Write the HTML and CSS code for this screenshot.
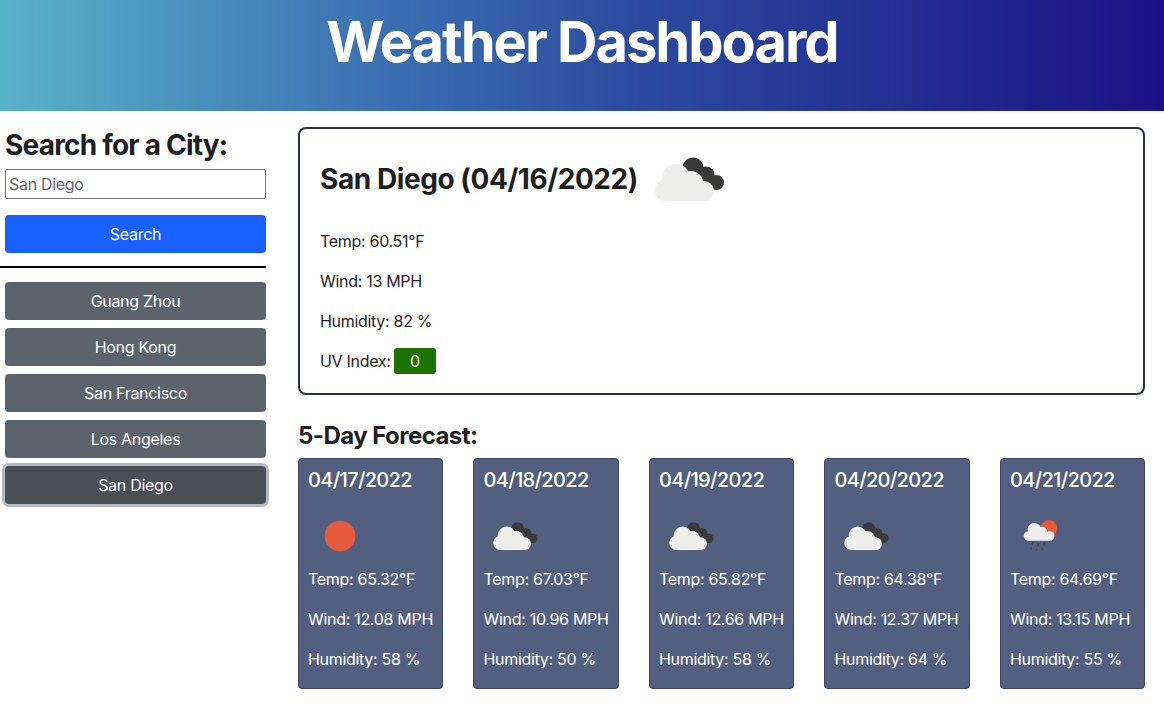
FILE: index.html
```html
<!DOCTYPE html>
<html lang="en">
<head>
  <meta charset="UTF-8" />
  <meta name="viewport" content="width=device-width, initial-scale=1.0" />
  <title>Weather Dashboard</title>
  <link rel="stylesheet" href="styles.css">
</head>
<body>
  <svg class="icon-defs" width="0" height="0" aria-hidden="true">
    <symbol id="light-cloud" viewBox="0 0 100 100">
      <circle cx="27" cy="61" r="11" />
      <circle cx="37" cy="49" r="14" />
      <circle cx="52" cy="54" r="12" />
      <circle cx="65" cy="62" r="10" />
      <rect x="27" y="56" width="38" height="16" />
    </symbol>
    <symbol id="dark-cloud" viewBox="0 0 100 100">
      <circle cx="54" cy="39" r="10.5" />
      <circle cx="67" cy="46" r="8.5" />
      <circle cx="77.5" cy="53.5" r="7.5" />
      <rect x="50" y="40" width="24" height="21" />
    </symbol>
    <symbol id="broken-clouds" viewBox="0 0 100 100">
      <use href="#dark-cloud" class="cloud-dark" />
      <use href="#light-cloud" class="cloud-light" />
    </symbol>
    <symbol id="clear-sky" viewBox="0 0 100 100">
      <circle cx="50" cy="50" r="24" class="sun" />
    </symbol>
    <symbol id="rain-sun" viewBox="0 0 100 100">
      <circle cx="61" cy="38" r="13" class="sun" />
      <g class="cloud-light">
        <circle cx="29" cy="50" r="7.5" />
        <circle cx="38" cy="40" r="10.5" />
        <circle cx="50" cy="44" r="8.5" />
        <circle cx="62" cy="50" r="7.5" />
        <rect x="29" y="46" width="33" height="11.5" />
      </g>
      <path class="rain" d="M36 59l-1.5 5M33.5 68l-1 3.5M45 61l-1.5 5M42 70l-1 3.5M54 60l-1.5 5M51 69l-1 3.5" />
    </symbol>
  </svg>

  <header class="page-header">
    <h1>Weather Dashboard</h1>
  </header>

  <div class="page-body">
    <aside class="sidebar">
      <h2>Search for a City:</h2>
      <form class="search-form">
        <input type="text" placeholder="San Diego" />
        <button type="button" class="btn btn-search">Search</button>
      </form>
      <hr />
      <div class="history">
        <button type="button" class="btn btn-city">Guang Zhou</button>
        <button type="button" class="btn btn-city">Hong Kong</button>
        <button type="button" class="btn btn-city">San Francisco</button>
        <button type="button" class="btn btn-city">Los Angeles</button>
        <button type="button" class="btn btn-city active">San Diego</button>
      </div>
    </aside>

    <main class="content">
      <section class="current">
        <div class="current-title">
          <h2>San Diego (04/16/2022)</h2>
          <svg class="icon-large"><use href="#broken-clouds" /></svg>
        </div>
        <p>Temp: 60.51°F</p>
        <p>Wind: 13 MPH</p>
        <p>Humidity: 82 %</p>
        <p>UV Index: <span class="uv">0</span></p>
      </section>

      <h3 class="forecast-title">5-Day Forecast:</h3>
      <section class="forecast">
        <div class="day">
          <h4>04/17/2022</h4>
          <svg class="icon-small"><use href="#clear-sky" /></svg>
          <p>Temp: 65.32°F</p>
          <p>Wind: 12.08 MPH</p>
          <p>Humidity: 58 %</p>
        </div>
        <div class="day">
          <h4>04/18/2022</h4>
          <svg class="icon-small"><use href="#broken-clouds" /></svg>
          <p>Temp: 67.03°F</p>
          <p>Wind: 10.96 MPH</p>
          <p>Humidity: 50 %</p>
        </div>
        <div class="day">
          <h4>04/19/2022</h4>
          <svg class="icon-small"><use href="#broken-clouds" /></svg>
          <p>Temp: 65.82°F</p>
          <p>Wind: 12.66 MPH</p>
          <p>Humidity: 58 %</p>
        </div>
        <div class="day">
          <h4>04/20/2022</h4>
          <svg class="icon-small"><use href="#broken-clouds" /></svg>
          <p>Temp: 64.38°F</p>
          <p>Wind: 12.37 MPH</p>
          <p>Humidity: 64 %</p>
        </div>
        <div class="day">
          <h4>04/21/2022</h4>
          <svg class="icon-small"><use href="#rain-sun" /></svg>
          <p>Temp: 64.69°F</p>
          <p>Wind: 13.15 MPH</p>
          <p>Humidity: 55 %</p>
        </div>
      </section>
    </main>
  </div>
</body>
</html>
```

FILE: styles.css
```css
* { box-sizing: border-box; }
body { margin: 0; font-family: Inter, "Liberation Sans", sans-serif; font-size: 16px; line-height: 24px; letter-spacing: -0.3px; color: #1c1e22; background: #fff; }
h1, h2, h3, h4, p { margin: 0; }
.icon-defs { display: block; height: 0; }

.page-header { height: 111px; background: linear-gradient(90deg, #5ab2c9 0%, #3b6fb1 33%, #2b4a9e 55%, #1a1186 100%); text-align: center; color: #fff; }
.page-header h1 { font-size: 56px; line-height: 84px; font-weight: 700; letter-spacing: -2px; }

.page-body { display: flex; padding-top: 16px; }
.sidebar { flex: 0 0 266px; }
.sidebar h2 { margin: 1px 0 7px 5px; height: 34px; font-size: 28px; line-height: 34px; font-weight: 700; letter-spacing: -0.8px; }
.search-form { display: flex; flex-direction: column; gap: 16px; padding-left: 5px; }
.search-form input { height: 30px; padding: 0 3px; font: inherit; letter-spacing: inherit; border: 1px solid #767676; border-radius: 2px; }
.search-form input::placeholder { color: #666; opacity: 1; }
.sidebar hr { margin: 13px 0 14px; border: 0; border-top: 2px solid #000; opacity: 1; }
.history { display: flex; flex-direction: column; gap: 8px; padding-left: 5px; }

.btn { height: 38px; padding-bottom: 2px; font: inherit; letter-spacing: inherit; color: #fff; border: 0; border-radius: 4px; cursor: pointer; }
.btn-search { background: #1760fd; }
.btn-city { background: #5c636a; }
.btn-city.active { background: #4a4f56; box-shadow: 0 0 0 3px #b6babe; }

.content { flex: 0 0 847px; margin-left: 32px; }
.current { height: 268px; padding: 0 20px; border: 2px solid #2d3047; border-radius: 8px; }
.current-title { display: flex; align-items: center; height: 100px; }
.current-title h2 { font-size: 28px; line-height: 34px; font-weight: 700; letter-spacing: -0.43px; }
.current p { margin-bottom: 16px; }
.current p:last-child { margin-top: -1px; }
.uv { display: inline-block; width: 42px; height: 26px; margin-left: -1px; line-height: 26px; text-align: center; color: #fff; background: #1c7300; border-radius: 3px; }

.forecast-title { margin: 26px 0 8px; font-size: 24px; line-height: 29px; font-weight: 700; letter-spacing: -0.55px; }
.forecast { display: flex; gap: 30.1px; }
.day { flex: 0 0 145.4px; height: 231px; padding: 9px 9px 0; color: #fff; background: #535f80; border: 1px solid #3c4562; border-radius: 4px; white-space: nowrap; }
.day h4 { font-size: 20px; line-height: 24px; font-weight: 500; letter-spacing: -0.65px; margin-bottom: 12px; }
.day p { margin-bottom: 16px; }
.day .icon-small { margin-bottom: -1px; }

.icon-large { flex: none; display: block; width: 100px; height: 100px; margin-left: 1px; }
.icon-small { display: block; width: 64px; height: 64px; }
.cloud-light { fill: #eeeeec; }
.cloud-dark { fill: #3a3a3a; }
.sun { fill: #e65a3c; }
.rain { fill: none; stroke: #4a4a4a; stroke-width: 2; }
```
